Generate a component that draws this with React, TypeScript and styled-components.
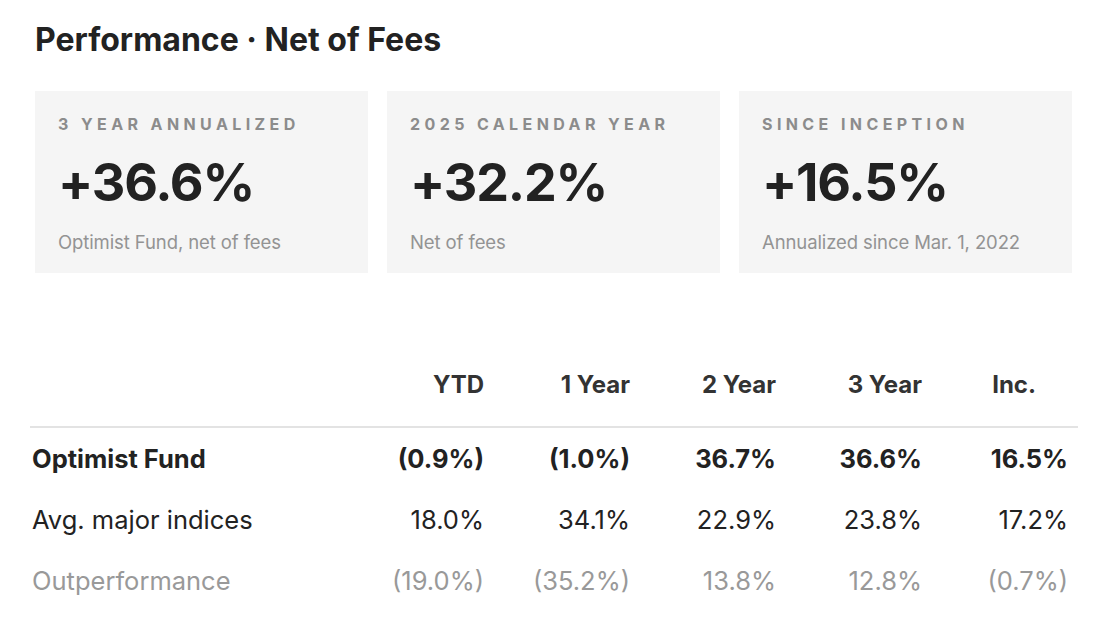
import React from "react";
import styled, { createGlobalStyle } from "styled-components";

const GlobalStyle = createGlobalStyle`
  html, body { margin: 0; padding: 0; background: #ffffff; }
  body { font-family: Inter, "Noto Sans", "Liberation Sans", sans-serif; color: #222; }
`;

const Page = styled.div`
  width: 1116px;
  height: 628px;
  box-sizing: border-box;
  padding: 22px 38px 0 30px;
  display: flex;
  flex-direction: column;
`;

const Title = styled.h1`
  margin: 0 0 0 5px;
  font-size: 32px;
  font-weight: 700;
  letter-spacing: 0;
  color: #222;
  line-height: 36px;
`;

const Cards = styled.div`
  display: grid;
  grid-template-columns: repeat(3, 333px);
  column-gap: 19px;
  margin: 33px 0 0 5px;
`;

const Card = styled.div`
  background: #f5f5f5;
  height: 182px;
  box-sizing: border-box;
  padding: 24px 23px 0;
  display: flex;
  flex-direction: column;
`;

const CardLabel = styled.div`
  font-size: 16px;
  font-weight: 700;
  letter-spacing: 4.4px;
  color: #8c8c8c;
  line-height: 18px;
  white-space: nowrap;
`;

const CardValue = styled.div`
  font-size: 52px;
  font-weight: 700;
  letter-spacing: -1.2px;
  color: #222;
  line-height: 60px;
  margin-top: 20px;
`;

const CardNote = styled.div`
  font-size: 18.5px;
  color: #939393;
  line-height: 20px;
  margin-top: 19px;
  letter-spacing: -0.1px;
`;

const Table = styled.div`
  margin-top: 97px;
  display: grid;
  grid-template-columns: 318px repeat(5, 146px);
`;

const HeadCell = styled.div<{ $pad?: number }>`
  font-size: 24px;
  font-weight: 700;
  color: #333;
  text-align: right;
  padding: 0 ${(p) => p.$pad ?? 10}px 0 10px;
  line-height: 30px;
  height: 56px;
`;

const Divider = styled.div`
  grid-column: 1 / -1;
  height: 2px;
  background: #e3e3e3;
`;

type Tone = "strong" | "normal" | "muted";

const Cell = styled.div<{ $tone: Tone; $first?: boolean }>`
  font-size: 25.5px;
  line-height: 61px;
  white-space: nowrap;
  padding: ${(p) => (p.$first ? "0 0 0 2px" : "0 10px")};
  text-align: ${(p) => (p.$first ? "left" : "right")};
  font-weight: ${(p) => (p.$tone === "strong" ? 700 : 400)};
  color: ${(p) => (p.$tone === "muted" ? "#999" : "#222")};
`;

const cards = [
  { label: "3 YEAR ANNUALIZED", value: "+36.6%", note: "Optimist Fund, net of fees" },
  { label: "2025 CALENDAR YEAR", value: "+32.2%", note: "Net of fees" },
  { label: "SINCE INCEPTION", value: "+16.5%", note: "Annualized since Mar. 1, 2022" },
];

const headers = ["YTD", "1 Year", "2 Year", "3 Year", "Inc."];

const rows: { name: string; tone: Tone; values: string[] }[] = [
  { name: "Optimist Fund", tone: "strong", values: ["(0.9%)", "(1.0%)", "36.7%", "36.6%", "16.5%"] },
  { name: "Avg. major indices", tone: "normal", values: ["18.0%", "34.1%", "22.9%", "23.8%", "17.2%"] },
  { name: "Outperformance", tone: "muted", values: ["(19.0%)", "(35.2%)", "13.8%", "12.8%", "(0.7%)"] },
];

export default function App() {
  return (
    <>
      <GlobalStyle />
      <Page>
        <Title>Performance · Net of Fees</Title>
        <Cards>
          {cards.map((c) => (
            <Card key={c.label}>
              <CardLabel>{c.label}</CardLabel>
              <CardValue>{c.value}</CardValue>
              <CardNote>{c.note}</CardNote>
            </Card>
          ))}
        </Cards>
        <Table>
          <HeadCell />
          {headers.map((h, i) => (
            <HeadCell key={h} $pad={i === headers.length - 1 ? 42 : 10}>
              {h}
            </HeadCell>
          ))}
          <Divider />
          {rows.map((r) => (
            <React.Fragment key={r.name}>
              <Cell $tone={r.tone} $first>
                {r.name}
              </Cell>
              {r.values.map((v, i) => (
                <Cell key={i} $tone={r.tone}>
                  {v}
                </Cell>
              ))}
            </React.Fragment>
          ))}
        </Table>
      </Page>
    </>
  );
}
